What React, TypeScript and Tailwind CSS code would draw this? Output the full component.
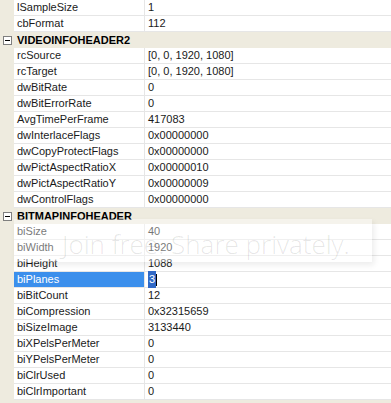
const rows: { name: string; value?: string; header?: boolean; selected?: boolean }[] = [
  { name: "lSampleSize", value: "1" },
  { name: "cbFormat", value: "112" },
  { name: "VIDEOINFOHEADER2", header: true },
  { name: "rcSource", value: "[0, 0, 1920, 1080]" },
  { name: "rcTarget", value: "[0, 0, 1920, 1080]" },
  { name: "dwBitRate", value: "0" },
  { name: "dwBitErrorRate", value: "0" },
  { name: "AvgTimePerFrame", value: "417083" },
  { name: "dwInterlaceFlags", value: "0x00000000" },
  { name: "dwCopyProtectFlags", value: "0x00000000" },
  { name: "dwPictAspectRatioX", value: "0x00000010" },
  { name: "dwPictAspectRatioY", value: "0x00000009" },
  { name: "dwControlFlags", value: "0x00000000" },
  { name: "BITMAPINFOHEADER", header: true },
  { name: "biSize", value: "40" },
  { name: "biWidth", value: "1920" },
  { name: "biHeight", value: "1088" },
  { name: "biPlanes", value: "3", selected: true },
  { name: "biBitCount", value: "12" },
  { name: "biCompression", value: "0x32315659" },
  { name: "biSizeImage", value: "3133440" },
  { name: "biXPelsPerMeter", value: "0" },
  { name: "biYPelsPerMeter", value: "0" },
  { name: "biClrUsed", value: "0" },
  { name: "biClrImportant", value: "0" },
];

function MinusBox() {
  return (
    <span className="flex h-[9px] w-[9px] items-center justify-center border border-[#7f7f7f] bg-white">
      <span className="h-px w-[5px] bg-black" />
    </span>
  );
}

export default function App() {
  return (
    <div
      className="relative h-[403px] w-[391px] overflow-hidden bg-[#eeebdf] text-[11px] text-[#1a1a1a]"
      style={{ fontFamily: '"Liberation Sans", Arial, sans-serif' }}
    >
      {rows.map((row) =>
        row.header ? (
          <div key={row.name} className="flex h-4 items-center bg-[#eeebdf]">
            <div className="flex w-[14px] justify-center pl-px">
              <MinusBox />
            </div>
            <span className="pl-[3px] text-[11px] font-bold text-black">{row.name}</span>
          </div>
        ) : (
          <div key={row.name} className="flex h-4">
            <div className="w-[14px] shrink-0 bg-[#eeebdf]" />
            <div
              className={
                row.selected
                  ? "flex w-[131px] shrink-0 items-center border-b border-r border-[#e6e6e6] bg-[#3b8fec] pl-[3px] text-white"
                  : "flex w-[131px] shrink-0 items-center border-b border-r border-[#e6e6e6] bg-white pl-[3px]"
              }
            >
              {row.name}
            </div>
            <div className="flex flex-1 items-center border-b border-[#e6e6e6] bg-white pl-[3px]">
              {row.selected ? (
                <>
                  <span className="bg-[#3169c6] px-px text-white">{row.value}</span>
                  <span className="h-3 w-px bg-black" />
                </>
              ) : (
                row.value
              )}
            </div>
          </div>
        )
      )}

      {/* watermark */}
      <div className="pointer-events-none absolute left-[14px] top-[219px] h-[43px] w-[358px] bg-white/40 shadow-[2px_3px_6px_rgba(0,0,0,0.08)]" />
      <div
        className="pointer-events-none absolute left-[62px] top-[225px] whitespace-nowrap text-[26px] font-light text-black/10"
        style={{ fontFamily: '"Open Sans", sans-serif' }}
      >
        Join free. Share privately.
      </div>
    </div>
  );
}
